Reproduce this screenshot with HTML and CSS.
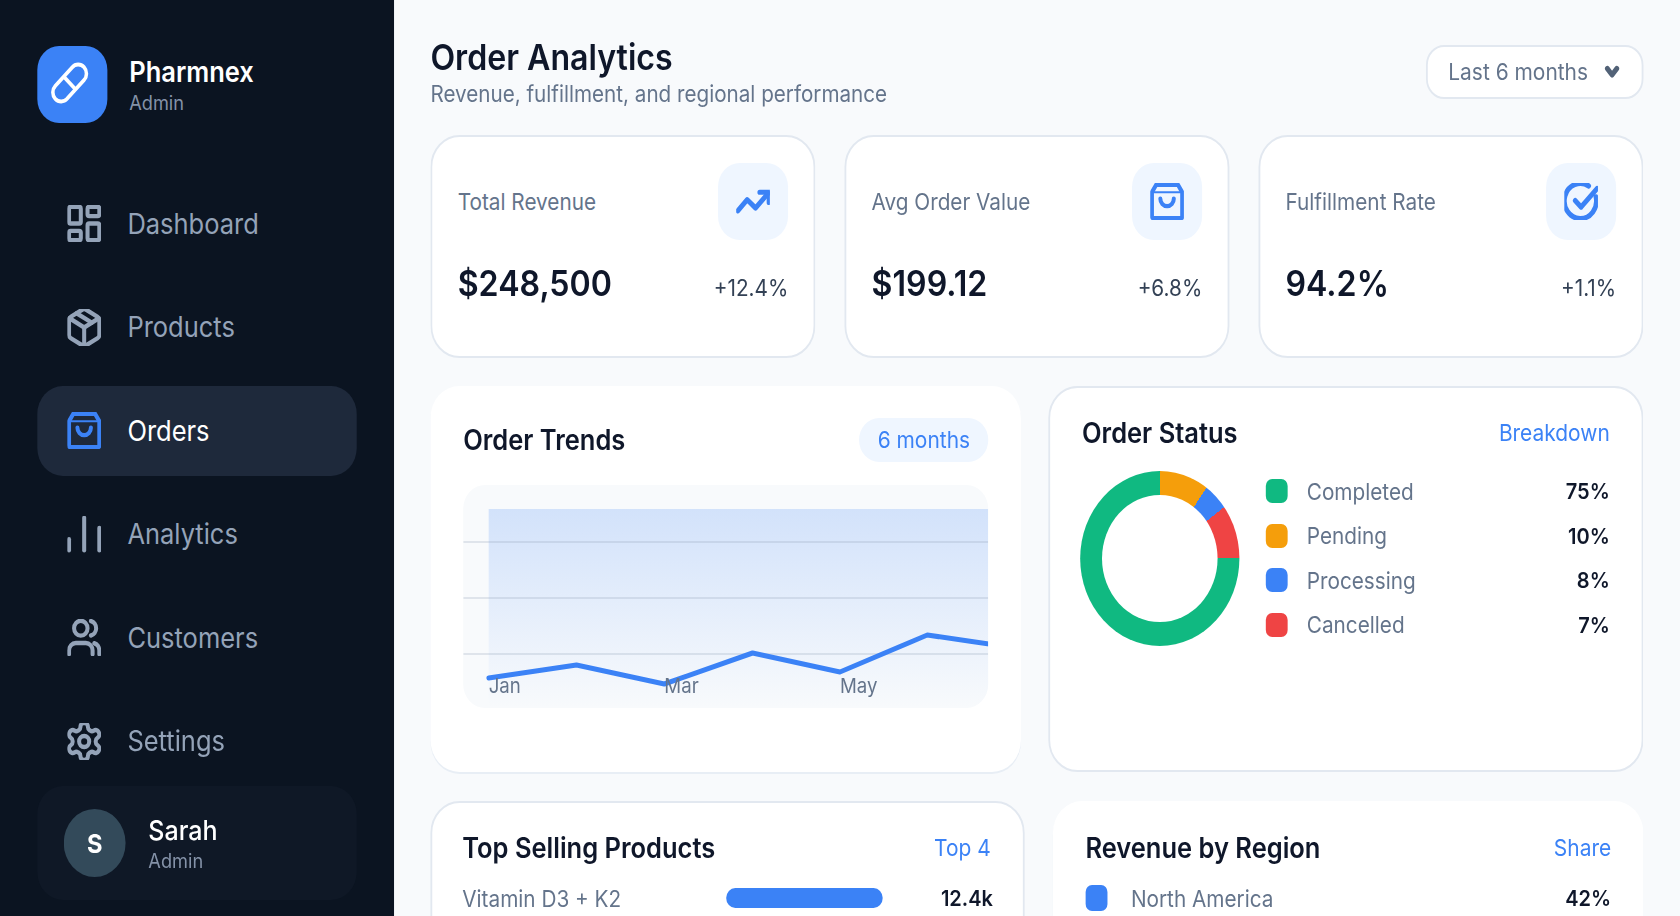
FILE: index.html
```html
<!DOCTYPE html>
<html lang="en">
<head>
    <meta charset="UTF-8">
    <meta name="viewport" content="width=device-width, initial-scale=1.0">
    <title>Order Analytics</title>
    <link rel="stylesheet" href="styles.css">
</head>
<body>

<div class="app">
    <aside class="sidebar">
        <div class="brand">
            <div class="brand-logo">
                <svg class="brand-pill" viewBox="3.600 2.800 20 20"><path d="M10.500 20.500l10-10a4.950 4.950 0 1 0-7-7l-10 10a4.950 4.950 0 1 0 7 7z"/><path d="M8.500 8.500l7 7"/></svg>
            </div>
            <div>
                <div class="brand-name">Pharmnex</div>
                <div class="brand-role">Admin</div>
            </div>
        </div>

        <nav class="nav">
            <a class="nav-item">
                <svg class="icon" viewBox="2 2 20 20"><rect x="3" y="3" width="7" height="9" rx="1"/><rect x="14" y="3" width="7" height="5" rx="1"/><rect x="14" y="12" width="7" height="9" rx="1"/><rect x="3" y="16" width="7" height="5" rx="1"/></svg>
                Dashboard
            </a>
            <a class="nav-item">
                <svg class="icon" viewBox="2 2 20 20"><path d="M21 8a2 2 0 0 0-1-1.730l-7-4a2 2 0 0 0-2 0l-7 4A2 2 0 0 0 3 8v8a2 2 0 0 0 1 1.730l7 4a2 2 0 0 0 2 0l7-4A2 2 0 0 0 21 16z"/><path d="M7.500 4.300l9 5.100"/><path d="M3.300 7L12 12l8.700-5"/><path d="M12 22V12"/></svg>
                Products
            </a>
            <a class="nav-item active">
                <svg class="icon" viewBox="2 2 20 20"><path d="M5.500 3h13L21 7v13a1 1 0 0 1-1 1H4a1 1 0 0 1-1-1V7z"/><path class="thin" d="M4 7h16"/><path d="M16 10.500a4 4 0 0 1-8 0"/></svg>
                Orders
            </a>
            <a class="nav-item">
                <svg class="icon" viewBox="2 2 20 20"><path d="M3 20.500v-6"/><path d="M12 20.500V3"/><path d="M21 20.500V8.500"/></svg>
                Analytics
            </a>
            <a class="nav-item">
                <svg class="icon" viewBox="2 2 20 20"><circle cx="10" cy="7" r="4"/><path d="M3 21v-2a4 4 0 0 1 4-4h6a4 4 0 0 1 4 4v2"/><path d="M16 3.100a4 4 0 0 1 0 7.800"/><path d="M21 21v-2a4 4 0 0 0-3-3.900"/></svg>
                Customers
            </a>
            <a class="nav-item">
                <svg class="icon" viewBox="2 2 20 20"><path d="M12.220 2h-.44a2 2 0 0 0-2 2v.18a2 2 0 0 1-1 1.730l-.43.25a2 2 0 0 1-2 0l-.15-.08a2 2 0 0 0-2.730.73l-.22.38a2 2 0 0 0 .73 2.730l.15.1a2 2 0 0 1 1 1.720v.51a2 2 0 0 1-1 1.740l-.15.09a2 2 0 0 0-.73 2.730l.22.38a2 2 0 0 0 2.730.73l.15-.08a2 2 0 0 1 2 0l.43.25a2 2 0 0 1 1 1.730V20a2 2 0 0 0 2 2h.44a2 2 0 0 0 2-2v-.18a2 2 0 0 1 1-1.730l.43-.25a2 2 0 0 1 2 0l.15.08a2 2 0 0 0 2.730-.73l.22-.39a2 2 0 0 0-.73-2.730l-.15-.08a2 2 0 0 1-1-1.740v-.5a2 2 0 0 1 1-1.740l.15-.09a2 2 0 0 0 .73-2.730l-.22-.38a2 2 0 0 0-2.730-.73l-.15.08a2 2 0 0 1-2 0l-.43-.25a2 2 0 0 1-1-1.730V4a2 2 0 0 0-2-2z"/><circle cx="12" cy="12" r="3"/></svg>
                Settings
            </a>
        </nav>

        <div class="user-card">
            <div class="avatar">S</div>
            <div>
                <div class="user-name">Sarah</div>
                <div class="user-role">Admin</div>
            </div>
        </div>
    </aside>

    <main class="main">
        <header class="page-header">
            <div>
                <h1 class="page-title">Order Analytics</h1>
                <p class="page-sub">Revenue, fulfillment, and regional performance</p>
            </div>
            <div class="range-select">
                Last 6 months
                <svg class="chevron" viewBox="1 1 14 12"><path d="M3.500 4l4.500 5.500L12.500 4"/></svg>
            </div>
        </header>

        <section class="stats">
            <div class="stat-card">
                <div class="stat-top">
                    <span class="stat-label">Total Revenue</span>
                    <span class="stat-icon"><svg class="icon icon-bold" viewBox="2 2 20 20"><path d="M21 7.500l-7.500 8-5-4.500L3 17"/><path d="M16 7h5.500v5.500"/></svg></span>
                </div>
                <div class="stat-bottom">
                    <span class="stat-value">$248,500</span>
                    <span class="stat-delta">+12.4%</span>
                </div>
            </div>
            <div class="stat-card">
                <div class="stat-top">
                    <span class="stat-label">Avg Order Value</span>
                    <span class="stat-icon"><svg class="icon" viewBox="2 2 20 20"><path d="M5.500 3h13L21 7v13a1 1 0 0 1-1 1H4a1 1 0 0 1-1-1V7z"/><path class="thin" d="M4 7h16"/><path d="M16 10.500a4 4 0 0 1-8 0"/></svg></span>
                </div>
                <div class="stat-bottom">
                    <span class="stat-value">$199.12</span>
                    <span class="stat-delta">+6.8%</span>
                </div>
            </div>
            <div class="stat-card">
                <div class="stat-top">
                    <span class="stat-label">Fulfillment Rate</span>
                    <span class="stat-icon"><svg class="icon icon-bold" viewBox="2 2 20 20"><path d="M20.800 9.500A9.500 9.500 0 1 1 16.500 3.600"/><path d="M8.500 11.500l3.500 3.500L21.500 5"/></svg></span>
                </div>
                <div class="stat-bottom">
                    <span class="stat-value">94.2%</span>
                    <span class="stat-delta">+1.1%</span>
                </div>
            </div>
        </section>

        <section class="row row-charts">
            <div class="card card-trends">
                <div class="card-head">
                    <h2 class="card-title">Order Trends</h2>
                    <span class="pill">6 months</span>
                </div>
                <div class="chart">
                    <svg class="chart-svg" viewBox="0 0 577 223">
                        <defs>
                            <linearGradient id="area" x1="0" y1="0" x2="0" y2="1">
                                <stop offset="0" stop-color="#3b82f6" stop-opacity="0.2"/>
                                <stop offset="1" stop-color="#3b82f6" stop-opacity="0"/>
                            </linearGradient>
                        </defs>
                        <rect x="28" y="24" width="549" height="199" fill="url(#area)"/>
                        <path class="grid-line" d="M0 57H577M0 113H577M0 169H577"/>
                        <path class="trend-line" d="M28 193L124.500 180L221 199L318 168L414 187L510 150L585 160"/>
                    </svg>
                    <div class="chart-labels">
                        <span>Jan</span>
                        <span>Mar</span>
                        <span>May</span>
                    </div>
                </div>
            </div>

            <div class="card card-border card-status">
                <div class="card-head">
                    <h2 class="card-title">Order Status</h2>
                    <span class="card-link">Breakdown</span>
                </div>
                <div class="status-body">
                    <div class="donut"></div>
                    <ul class="legend">
                        <li><span class="swatch green"></span>Completed<b>75%</b></li>
                        <li><span class="swatch amber"></span>Pending<b>10%</b></li>
                        <li><span class="swatch blue"></span>Processing<b>8%</b></li>
                        <li><span class="swatch red"></span>Cancelled<b>7%</b></li>
                    </ul>
                </div>
            </div>
        </section>

        <section class="row row-lists">
            <div class="card card-border card-products">
                <div class="card-head">
                    <h2 class="card-title">Top Selling Products</h2>
                    <span class="card-link">Top 4</span>
                </div>
                <div class="product-row">
                    <span class="product-name">Vitamin D3 + K2</span>
                    <span class="product-bar"></span>
                    <b>12.4k</b>
                </div>
            </div>
            <div class="card card-region">
                <div class="card-head">
                    <h2 class="card-title">Revenue by Region</h2>
                    <span class="card-link">Share</span>
                </div>
                <ul class="legend">
                    <li><span class="swatch blue"></span>North America<b>42%</b></li>
                </ul>
            </div>
        </section>
    </main>
</div>

</body>
</html>
```

FILE: styles.css
```css
html, body {
    margin: 0;
    height: 916px;
    overflow: hidden;
    background-color: #f8fafc;
}

body {
    font-family: 'Inter', 'Liberation Sans', sans-serif;
    color: #0f172a;
}

h1, h2, p, ul {
    margin: 0;
    padding: 0;
}

ul {
    list-style: none;
}

.app {
    display: flex;
    width: 1846px;
    height: 916px;
    overflow: hidden;
    transform: scaleX(0.91);
    transform-origin: 0 0;
}

.icon {
    width: 37px;
    height: 37px;
    flex: none;
    fill: none;
    stroke: currentColor;
    stroke-width: 2.400;
    stroke-linecap: round;
    stroke-linejoin: round;
}

.icon .thin {
    stroke-width: 1;
}

.icon-bold {
    stroke-width: 2.800;
}

.sidebar {
    width: 433px;
    flex: none;
    box-sizing: border-box;
    padding: 46px 41px 0;
    background-color: #0b1421;
}

.brand {
    display: flex;
    align-items: center;
    gap: 24px;
    height: 77px;
    margin-bottom: 55.500px;
}

.brand-logo {
    width: 77px;
    height: 77px;
    border-radius: 24px;
    background-color: #3b82f6;
    display: flex;
    justify-content: center;
    align-items: center;
}

.brand-pill {
    width: 37px;
    height: 37px;
    overflow: visible;
    fill: none;
    stroke: white;
    stroke-width: 2.100;
    stroke-linejoin: round;
}

.brand-name {
    font-size: 28px;
    font-weight: 600;
    line-height: 36px;
    color: white;
}

.brand-role {
    font-size: 20px;
    line-height: 26px;
    color: #8492a8;
}

.nav {
    display: flex;
    flex-direction: column;
    gap: 13.500px;
}

.nav-item {
    display: flex;
    align-items: center;
    gap: 29px;
    height: 90px;
    padding-left: 33px;
    border-radius: 28px;
    font-size: 28px;
    color: #94a3b8;
}

.nav-item.active {
    background-color: #1e293b;
    color: white;
}

.nav-item.active .icon {
    color: #3b82f6;
}

.user-card {
    display: flex;
    align-items: center;
    gap: 25px;
    height: 114px;
    padding-left: 29px;
    border-radius: 28px;
    background-color: #0f1826;
}

.avatar {
    width: 68px;
    height: 68px;
    border-radius: 50%;
    background-color: #334a5a;
    color: white;
    font-size: 26px;
    font-weight: 700;
    display: flex;
    justify-content: center;
    align-items: center;
}

.user-name {
    margin-top: 2px;
    font-size: 27.500px;
    font-weight: 500;
    line-height: 34px;
    color: white;
}

.user-role {
    font-size: 20px;
    line-height: 28px;
    color: #8492a8;
}

.main {
    flex: 1;
    min-width: 0;
    box-sizing: border-box;
    padding: 37px 40.500px 0 40px;
}

.page-header {
    display: flex;
    justify-content: space-between;
    align-items: flex-start;
    height: 98px;
}

.page-title {
    font-size: 35.300px;
    line-height: 42px;
    font-weight: 600;
}

.page-sub {
    font-size: 22.700px;
    line-height: 30px;
    color: #64748b;
}

.range-select {
    width: 239px;
    height: 54px;
    box-sizing: border-box;
    margin-top: 8px;
    padding: 0 24px 0 23px;
    border: 2px solid #e2e8f0;
    border-radius: 20px;
    background-color: white;
    color: #64748b;
    font-size: 23px;
    display: flex;
    justify-content: space-between;
    align-items: center;
}

.chevron {
    width: 17px;
    height: 14px;
    flex: none;
    fill: none;
    stroke: #526277;
    stroke-width: 4.500;
    stroke-linecap: round;
    stroke-linejoin: round;
}

.stats {
    display: grid;
    grid-template-columns: repeat(3, 1fr);
    gap: 32px;
}

.stat-card {
    height: 223px;
    box-sizing: border-box;
    padding: 26px 27.500px 0 28px;
    border: 2px solid #e2e8f0;
    border-radius: 32px;
    background-color: white;
}

.stat-top {
    display: flex;
    justify-content: space-between;
    align-items: center;
}

.stat-label {
    font-size: 22.800px;
    color: #64748b;
}

.stat-icon {
    width: 77px;
    height: 77px;
    border-radius: 24px;
    background-color: #eff6ff;
    color: #3b82f6;
    display: flex;
    justify-content: center;
    align-items: center;
}

.stat-bottom {
    display: flex;
    justify-content: space-between;
    align-items: baseline;
    margin-top: 22px;
}

.stat-value {
    font-size: 35.300px;
    font-weight: 600;
}

.stat-delta {
    font-size: 22.800px;
    color: #334155;
}

.row {
    display: grid;
    gap: 31px;
    margin-top: 28px;
}

.row-charts {
    grid-template-columns: 649px 1fr;
    gap: 30px;
    height: 386px;
}

.row-lists {
    grid-template-columns: 652fr 648fr;
    height: 300px;
    margin-top: 29px;
}

.card {
    box-sizing: border-box;
    padding: 32px 36px 0 36px;
    border-radius: 32px;
    background-color: white;
    box-shadow: 0 2px 0 #e8eef5;
}

.card-border {
    padding: 29px 34.500px 0 33px;
    border: 2px solid #e2e8f0;
    box-shadow: none;
}

.card-status .card-title {
    margin-left: 2px;
}

.card-products {
    padding-right: 35px;
}

.card-region {
    padding-top: 31px;
    padding-right: 35px;
}

.card-head {
    display: flex;
    justify-content: space-between;
    align-items: center;
}

.card-title {
    font-size: 28px;
    line-height: 32px;
    font-weight: 600;
}

.card-link {
    font-size: 23px;
    color: #3b82f6;
}

.pill {
    height: 44px;
    padding: 0 20px;
    border-radius: 22px;
    background-color: #eff6ff;
    color: #3b82f6;
    font-size: 23px;
    display: flex;
    align-items: center;
}

.card-trends .card-head {
    margin-bottom: 23px;
}

.chart {
    position: relative;
    height: 223px;
    border-radius: 24px;
    background-color: #f8fafc;
    overflow: hidden;
}

.chart-svg {
    display: block;
    width: 100%;
    height: 100%;
}

.grid-line {
    fill: none;
    stroke: #94a3b8;
    stroke-opacity: 0.25;
    stroke-width: 2;
}

.trend-line {
    fill: none;
    stroke: #3b82f6;
    stroke-width: 5;
    stroke-linecap: round;
    stroke-linejoin: round;
}

.chart-labels {
    position: absolute;
    left: 28px;
    top: 188px;
    display: grid;
    grid-template-columns: repeat(3, 193px);
    font-size: 20.500px;
    line-height: 26px;
    color: #64748b;
}

.status-body {
    display: flex;
    gap: 29px;
    margin-top: 22px;
}

.donut {
    position: relative;
    width: 175px;
    height: 175px;
    flex: none;
    border-radius: 50%;
    background: conic-gradient(from 90deg, #10b981 0 75%, #f59e0b 75% 85%, #3b82f6 85% 90%, #ef4444 90% 100%);
}

.donut::after {
    content: '';
    position: absolute;
    inset: 24px;
    border-radius: 50%;
    background-color: white;
}

.status-body .legend {
    flex: 1;
    margin-top: -2px;
}

.legend li {
    display: flex;
    align-items: center;
    height: 44.500px;
    font-size: 22.800px;
    color: #64748b;
}

.legend b {
    margin-left: auto;
    font-size: 22px;
    font-weight: 600;
    color: #0f172a;
}

.swatch {
    width: 24px;
    height: 24px;
    flex: none;
    margin-right: 21px;
    border-radius: 7px;
}

.card-region .swatch {
    height: 26px;
    margin-right: 26px;
}

.green { background-color: #10b981; }
.amber { background-color: #f59e0b; }
.blue { background-color: #3b82f6; }
.red { background-color: #ef4444; }

.row-lists .card-head {
    margin-bottom: 12px;
}

.product-row {
    display: flex;
    align-items: center;
    height: 44px;
    font-size: 22.800px;
    color: #64748b;
}

.product-name {
    flex: none;
    width: 290px;
}

.product-bar {
    width: 172px;
    height: 20px;
    border-radius: 10px;
    background-color: #3b82f6;
}

.product-row b {
    margin-left: auto;
    margin-right: -2.400px;
    font-size: 22px;
    font-weight: 600;
    color: #0f172a;
}
```
